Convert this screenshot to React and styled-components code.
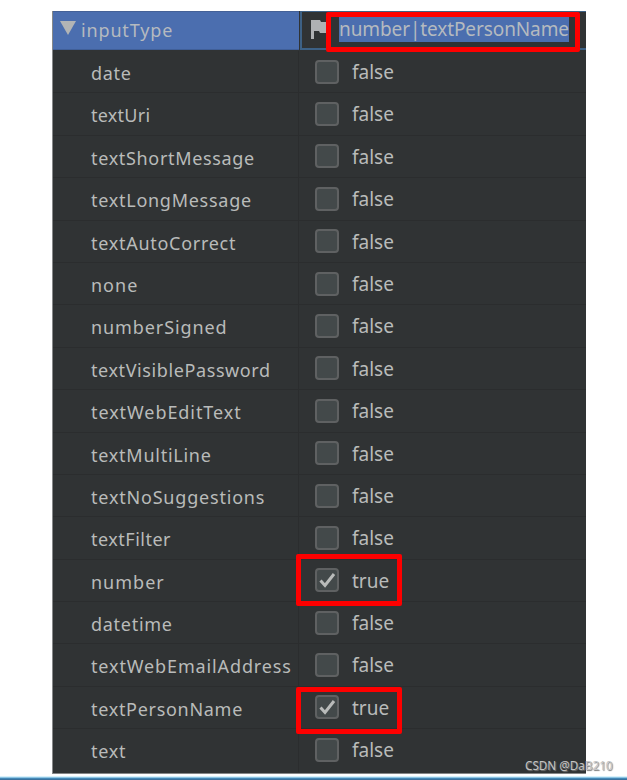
import React from "react";
import styled, { createGlobalStyle } from "styled-components";

const GlobalStyle = createGlobalStyle`
  * { box-sizing: border-box; }
  html, body { margin: 0; background: #fff; overflow: hidden; }
`;

const Page = styled.main`
  position: relative;
  display: flex;
  flex-direction: column;
  width: 627px;
  height: 780px;
  padding-top: 11px;
  background: #fff;
  font-family: "Noto Sans", "Open Sans", sans-serif;
`;

const Table = styled.section`
  width: 534px;
  height: 763px;
  flex: none;
  margin-left: 52px;
  background: #303334;
  border-left: 1px solid #87898a;
  border-bottom: 1px solid #858686;
`;

const Header = styled.div`
  display: flex;
  height: 40px;
`;

const HeaderName = styled.div`
  display: flex;
  width: 246px;
  height: 39px;
  padding-left: 7px;
  background: #4b6eaf;
  border-top: 1px solid #446197;
  border-bottom: 1px solid #405f98;
`;

const Arrow = styled.svg`
  width: 16px;
  height: 15px;
  margin-top: 8px;
`;

const HeaderLabel = styled.span`
  margin-left: 5px;
  font-size: 18px;
  line-height: 37px;
  letter-spacing: 0.85px;
  color: #b5babf;
`;

const Editor = styled.div`
  position: relative;
  display: flex;
  flex: 1;
  height: 39px;
  margin-left: 1px;
  border: 2px solid #3d6185;
  border-right: 0;
  border-top-width: 1px;
`;

const Flag = styled.svg`
  width: 17px;
  height: 20px;
  margin: 8px 0 0 9px;
`;

const Selected = styled.span`
  width: 230px;
  height: 25px;
  margin: 5px 0 0 11px;
  background: #4b6eaf;
  color: #b5babf;
  font-size: 19px;
  line-height: 25px;
  letter-spacing: -0.1px;
  white-space: nowrap;
`;

const Row = styled.div`
  display: flex;
  height: 42.4px;
  border-bottom: ${(p) => (p.$last ? "0" : "1px solid #2b2d2e")};
`;

const NameCell = styled.div`
  width: 246px;
  padding-left: 38px;
  border-right: 1px solid #2b2d2e;
  color: #b9bbba;
  font-size: 18px;
  line-height: 44px;
  letter-spacing: ${(p) => p.$spacing}px;
  white-space: nowrap;
`;

const ValueCell = styled.div`
  position: relative;
  display: flex;
  flex: 1;
  padding-left: 16px;
  color: #b9bbba;
  font-size: 19px;
  line-height: 42px;
`;

const CheckBox = styled.span`
  width: 24px;
  height: 24px;
  margin: 8.6px 13px 0 0;
  border: 2px solid #5f6162;
  border-radius: 4px;
  background: #43494a;
`;

const Tick = styled.svg`
  display: block;
  width: 20px;
  height: 20px;
`;

const Mark = styled.i`
  position: absolute;
  border: 5px solid #fe0000;
  border-radius: 2px;
  left: ${(p) => p.$x}px;
  top: ${(p) => p.$y}px;
  width: ${(p) => p.$w}px;
  height: ${(p) => p.$h}px;
`;

const Watermark = styled.div`
  position: absolute;
  left: 525px;
  top: 757px;
  font-size: 11.7px;
  line-height: 17px;
  white-space: nowrap;
  color: #c4c4c4;
  text-shadow: 1px 1px 1px #777;
`;

const Footer = styled.div`
  height: 4px;
  margin-top: 2px;
  background: linear-gradient(#d8f1fb 0 1px, #8ec5e4 1px 2px, #4589b7 2px 3px, #3a719d 3px);
`;

const flags = [
  { name: "date", spacing: 0.7 },
  { name: "textUri", spacing: 0.25 },
  { name: "textShortMessage", spacing: 0.67 },
  { name: "textLongMessage", spacing: 0.73 },
  { name: "textAutoCorrect", spacing: 0.72 },
  { name: "none", spacing: 1 },
  { name: "numberSigned", spacing: 0.9 },
  { name: "textVisiblePassword", spacing: 0.6 },
  { name: "textWebEditText", spacing: 0.93 },
  { name: "textMultiLine", spacing: 0.75 },
  { name: "textNoSuggestions", spacing: 0.8 },
  { name: "textFilter", spacing: 0.5 },
  { name: "number", spacing: 1, checked: true, mark: { x: -3, y: -6, h: 52 } },
  { name: "datetime", spacing: 0.72 },
  { name: "textWebEmailAddress", spacing: 0.87 },
  { name: "textPersonName", spacing: 0.7, checked: true, mark: { x: -3, y: 0, h: 47 } },
  { name: "text", spacing: 0.7 },
];

function FlagRow({ flag, last }) {
  return (
    <Row $last={last}>
      <NameCell $spacing={flag.spacing}>{flag.name}</NameCell>
      <ValueCell>
        <CheckBox>
          {flag.checked && (
            <Tick viewBox="0 0 20 20">
              <path d="M3.5 10.5 L8 15.5 L17 4" fill="none" stroke="#b9bbba" strokeWidth="3" />
            </Tick>
          )}
        </CheckBox>
        <span>{flag.checked ? "true" : "false"}</span>
        {flag.mark && <Mark $x={flag.mark.x} $y={flag.mark.y} $w={106} $h={flag.mark.h} />}
      </ValueCell>
    </Row>
  );
}

export default function App() {
  return (
    <Page>
      <GlobalStyle />
      <Table>
        <Header>
          <HeaderName>
            <Arrow viewBox="0 0 16 15"><path d="M0 1h16L8 15z" fill="#b2b4b5" /></Arrow>
            <HeaderLabel>inputType</HeaderLabel>
          </HeaderName>
          <Editor>
            <Flag viewBox="0 0 17 20"><path d="M0 0h9l1 2h7v11H9l-1-2H3v8H0z" fill="#afb1b3" /></Flag>
            <Selected>number|textPersonName</Selected>
            <Mark $x={24} $y={0} $w={254} $h={40} />
          </Editor>
        </Header>
        {flags.map((flag, i) => (
          <FlagRow key={flag.name} flag={flag} last={i === flags.length - 1} />
        ))}
      </Table>
      <Footer />
      <Watermark>CSDN @DaB210</Watermark>
    </Page>
  );
}
